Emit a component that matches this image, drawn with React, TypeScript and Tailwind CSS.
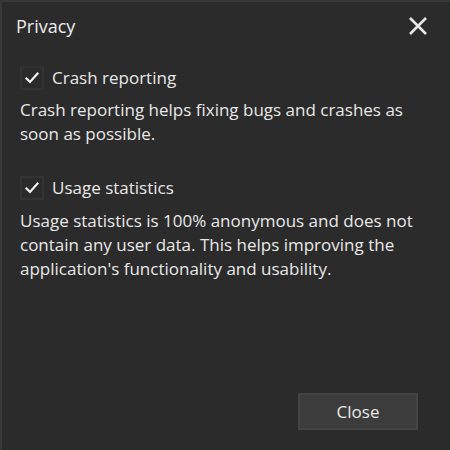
import React from "react";

function Check() {
  return (
    <div className="w-[24px] h-[24px] border-2 border-[#333333] bg-[#2b2b2b] flex items-center justify-center">
      <svg width="16" height="16" viewBox="0 0 16 16">
        <path d="M2.5 8.5 L6 12 L13.5 3.5" fill="none" stroke="#f0f0f0" strokeWidth="2.2" strokeLinecap="square" />
      </svg>
    </div>
  );
}

export default function App() {
  return (
    <div
      className="w-[450px] h-[450px] bg-[#2b2b2b] border-t-2 border-l-2 border-[#383838] text-[#e8e8e8] flex flex-col"
      style={{ fontFamily: '"Open Sans", "Noto Sans", sans-serif' }}
    >
      <div className="h-[48px] flex items-center justify-between pl-[14px] pr-[22px]">
        <span className="text-[18px] text-[#ececec]">Privacy</span>
        <svg width="20" height="20" viewBox="0 0 20 20">
          <path d="M2 2 L18 18 M18 2 L2 18" stroke="#e6e6e6" strokeWidth="2.6" />
        </svg>
      </div>
      <div className="flex flex-col px-[18px] text-[17px] leading-[24px]">
        <div className="flex items-center gap-[8px] mt-[16px]">
          <Check />
          <span>Crash reporting</span>
        </div>
        <p className="mt-[8px]">Crash reporting helps fixing bugs and crashes as soon as possible.</p>
        <div className="flex items-center gap-[8px] mt-[30px]">
          <Check />
          <span>Usage statistics</span>
        </div>
        <p className="mt-[9px]">
          Usage statistics is 100% anonymous and does not contain any user data. This helps improving the application's functionality and usability.
        </p>
      </div>
      <div className="flex-1" />
      <div className="flex justify-end pr-[32px] pb-[20px]">
        <button className="w-[120px] h-[37px] bg-[#3c3c3c] border-2 border-[#444444] text-[17px] text-[#e8e8e8]">
          Close
        </button>
      </div>
    </div>
  );
}
